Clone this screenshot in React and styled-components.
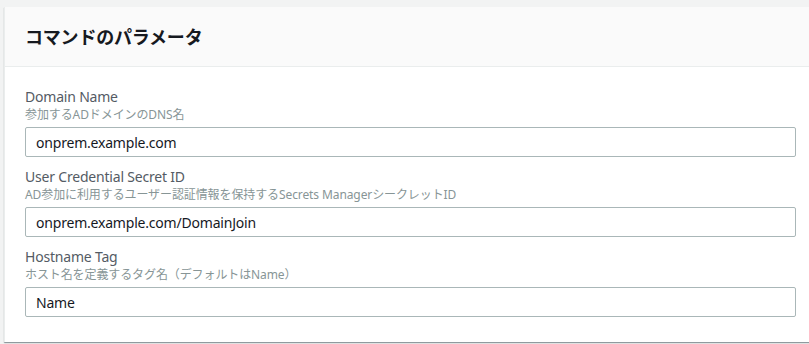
import styled, { createGlobalStyle } from "styled-components";

const GlobalStyle = createGlobalStyle`
    html, body {
        margin: 0;
        padding: 0;
        background: #f2f3f3;
        overflow: hidden;
    }
    * {
        box-sizing: border-box;
    }
`

const fields = [
    {
        label: "Domain Name",
        description: "参加するADドメインのDNS名",
        value: "onprem.example.com",
    },
    {
        label: "User Credential Secret ID",
        description: "AD参加に利用するユーザー認証情報を保持するSecrets ManagerシークレットID",
        value: "onprem.example.com/DomainJoin",
    },
    {
        label: "Hostname Tag",
        description: "ホスト名を定義するタグ名（デフォルトはName）",
        value: "Name",
    },
];

export default function App() {
    return (
        <Page>
            <GlobalStyle />
            <Card>
                <CardHeader>
                    <h2>コマンドのパラメータ</h2>
                </CardHeader>

                <CardBody>
                    {fields.map((f) => (
                        <Field key={f.label}>
                            <Label>{f.label}</Label>
                            <Description>{f.description}</Description>
                            <Input type="text" defaultValue={f.value} />
                        </Field>
                    ))}
                </CardBody>
            </Card>
        </Page>
    );
}

const Page = styled.div`
    width: 809px;
    height: 344px;
    padding: 7px 0 0 4px;
    font-family: "Noto Sans", "Noto Sans CJK JP", sans-serif;
`

const Card = styled.div`
    width: 812px;
    background: #ffffff;
    border-left: 1px solid #eaeded;
    box-shadow: 0 1px 1px 0 rgba(0, 28, 36, 0.3), 1px 1px 1px 0 rgba(0, 28, 36, 0.15);
`

const CardHeader = styled.div`
    height: 60px;
    background: #fafafa;
    border-bottom: 1px solid #eaeded;
    padding: 0 20px;
    display: flex;
    align-items: center;

    h2{
        margin: 0;
        font-size: 18px;
        line-height: 24px;
        font-weight: 700;
        color: #16191f;
        letter-spacing: -0.2px;
    }
`

const CardBody = styled.div`
    padding: 20px 0 25px 20px;
    width: 792px;
    display: flex;
    flex-direction: column;
    gap: 10px;
`

const Field = styled.div`
    display: flex;
    flex-direction: column;
`

const Label = styled.label`
    font-size: 14px;
    line-height: 20px;
    color: #545b64;
    letter-spacing: -0.2px;
`

const Description = styled.div`
    font-size: 12px;
    line-height: 16px;
    color: #879596;
    margin-bottom: 4px;
    letter-spacing: -0.1px;
`

const Input = styled.input`
    width: 771px;
    height: 30px;
    border: 1px solid #aab7b8;
    border-radius: 2px;
    padding: 0 10px;
    font-family: inherit;
    font-size: 14px;
    letter-spacing: -0.2px;
    color: #16191f;
    background: #ffffff;
    outline: none;
`
